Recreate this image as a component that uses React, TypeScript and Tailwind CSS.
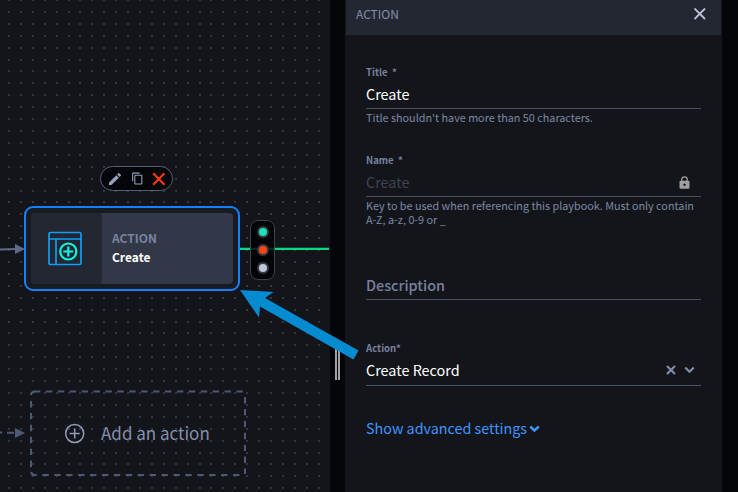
import type { ReactNode } from "react";

const PITCH = 11.91;

function DotGrid() {
  const dots: ReactNode[] = [];
  for (let row = 0; row < 42; row++) {
    for (let col = 0; col < 28; col++) {
      dots.push(
        <rect
          key={`${row}-${col}`}
          x={Math.round(8 + col * PITCH)}
          y={Math.round(-1 + row * PITCH)}
          width="2"
          height="2"
        />,
      );
    }
  }
  return (
    <svg className="absolute inset-0" width="330" height="492" fill="#303646">
      {dots}
    </svg>
  );
}

function Connectors() {
  return (
    <svg className="absolute inset-0" width="330" height="492">
      <path d="M0 249.5 L16 249" stroke="#5d6a8a" strokeWidth="2" />
      <path d="M15 244 L25 249 L15 254 Z" fill="#5d6a8a" />
      <path d="M240 248.8 H329" stroke="#0bdb7d" strokeWidth="2.2" />
      <path d="M0 432.5 H2 M7 432.7 H14" stroke="#4d5975" strokeWidth="2" />
      <path d="M15 428 L25 433 L15 438 Z" fill="#4d5975" />
    </svg>
  );
}

function RecordIcon() {
  return (
    <svg className="-ml-[3px]" width="36" height="36" viewBox="0 0 36 36" fill="none" stroke="#0e9ffa" strokeWidth="1.7">
      <rect x="2" y="1.5" width="32" height="32" rx="1.5" />
      <path d="M2 8 H34 M9 8 V33.5" />
      <circle cx="21.3" cy="20.5" r="8" fill="#232731" stroke="#0cf5e0" strokeWidth="2.2" />
      <path d="M21.3 15.5 V25.5 M16.3 20.5 H26.3" stroke="#0cf5e0" strokeWidth="2.2" />
    </svg>
  );
}

function NodeToolbar() {
  return (
    <div className="absolute left-[100px] top-[166px] flex h-[25px] w-[73px] items-center rounded-full border border-[#566078] bg-[#050609] pl-[6px]">
      <svg width="16" height="16" viewBox="0 0 24 24" fill="#95a0ba">
        <path d="M3 17.25V21h3.75L17.81 9.94l-3.75-3.75L3 17.25zM20.71 7.04a1 1 0 0 0 0-1.41l-2.34-2.34a1 1 0 0 0-1.41 0l-1.83 1.83 3.75 3.75 1.83-1.83z" />
      </svg>
      <svg className="ml-[8px]" width="13" height="13" viewBox="0 0 24 24" fill="#95a0ba">
        <path d="M16 1H4a2 2 0 0 0-2 2v14h2V3h12V1zm3 4H8a2 2 0 0 0-2 2v14a2 2 0 0 0 2 2h11a2 2 0 0 0 2-2V7a2 2 0 0 0-2-2zm0 16H8V7h11v14z" />
      </svg>
      <svg className="ml-[8px]" width="14" height="14" viewBox="0 0 14 14" stroke="#ff3d0f" strokeWidth="2">
        <path d="M1.2 1.2 L12.4 12.8 M12.4 1.2 L1.2 12.8" />
      </svg>
    </div>
  );
}

function ActionNode() {
  return (
    <div className="absolute left-[24px] top-[206px] h-[85px] w-[216px] rounded-[9px] border-2 border-[#1580fb] bg-[#181b22] p-[5px]">
      <div className="flex h-full overflow-hidden rounded-[4px] bg-[#323847]">
        <div className="flex w-[71px] items-center justify-center rounded-r-[3px] bg-[#232731]">
          <RecordIcon />
        </div>
        <div className="flex flex-col pl-[10px] pt-[15px] font-bold">
          <span className="text-[12px] leading-[19px] text-[#77839f]">ACTION</span>
          <span className="text-[12px] leading-[19px] text-white">Create</span>
        </div>
      </div>
    </div>
  );
}

function StatusPorts() {
  return (
    <div className="absolute left-[250px] top-[220px] flex h-[60px] w-[25px] flex-col items-center justify-center gap-[6px] rounded-[8px] border border-[#3a4152] bg-black/80">
      <span className="size-[12px] rounded-full border-2 border-[#343947] bg-[#22e0b5]" />
      <span className="size-[12px] rounded-full border-2 border-[#343947] bg-[#ff4713]" />
      <span className="size-[12px] rounded-full border-2 border-[#343947] bg-[#c2c7d6]" />
    </div>
  );
}

function AddActionNode() {
  return (
    <div className="absolute left-[30px] top-[390px] h-[86px] w-[216px]">
      <svg className="absolute inset-0" width="216" height="86" fill="none" stroke="#4d5975" strokeWidth="2">
        <path d="M4 1.5 H213" strokeDasharray="6.4 5.51" strokeDashoffset="0" />
        <path d="M1.5 85 H211" strokeDasharray="6.4 5.51" strokeDashoffset="1" />
        <path d="M1 11 V78" strokeDasharray="6.4 5.51" />
        <path d="M215 7 V84" strokeDasharray="6.4 5.51" />
        <path d="M1 5 Q1 1.5 5 1.5 M1 82 Q2 85 5 85" />
      </svg>
      <div className="relative flex h-full items-center pl-[34px]">
        <svg width="21" height="21" viewBox="0 0 21 21" fill="none" stroke="#8f9bb8" strokeWidth="1.5">
          <circle cx="10.7" cy="10.5" r="9" />
          <path d="M10.7 5.5 V15.5 M5.7 10.5 H15.7" />
        </svg>
        <span className="ml-[16px] whitespace-nowrap text-[17px] leading-[22px] text-[#8490ac]">Add an action</span>
      </div>
    </div>
  );
}

function Canvas() {
  return (
    <div className="relative h-full w-[330px] shrink-0 overflow-hidden bg-[#13151a]">
      <DotGrid />
      <Connectors />
      <NodeToolbar />
      <ActionNode />
      <StatusPorts />
      <AddActionNode />
    </div>
  );
}

function Splitter() {
  return (
    <div className="flex h-full w-[15px] shrink-0 justify-center bg-[#050609] pt-[346px]">
      <div className="flex h-[34px] gap-px">
        <span className="w-[2px] bg-[#a2a2a4]" />
        <span className="w-[2px] bg-[#a2a2a4]" />
      </div>
    </div>
  );
}

function Label({ children }: { children: ReactNode }) {
  return <div className="whitespace-pre text-[9.6px] font-bold leading-[14px] text-[#77839f]">{children}</div>;
}

function Panel() {
  return (
    <div className="flex h-full w-[377px] shrink-0 flex-col bg-[#13151a] pl-px">
      <header className="flex h-[35px] w-[375px] shrink-0 items-center justify-between bg-[#232731] pb-[7px] pl-[10px] pr-[15px]">
        <span className="text-[12px] leading-[18px] text-[#8490ac]">ACTION</span>
        <svg width="12" height="12" viewBox="0 0 12 12" stroke="#b9c3dc" strokeWidth="1.8">
          <path d="M.5 .5 L11 11 M11 .5 L.5 11" />
        </svg>
      </header>
      <div className="flex flex-col pl-[20px] pr-[21px] pt-[30px]">
        <Label>{"Title  *"}</Label>
        <div className="flex h-[30px] items-center border-b border-[#465269] pt-px text-[14.4px] leading-[24px] text-white">Create</div>
        <p className="text-[10.8px] leading-[16px] text-[#7d89a6]">Title shouldn't have more than 50 characters.</p>

        <div className="pt-[28px]">
          <Label>{"Name  *"}</Label>
        </div>
        <div className="flex h-[30px] items-center justify-between border-b border-[#465269] pr-[11px] pt-px">
          <span className="text-[14.4px] leading-[24px] text-[#3d4454]">Create</span>
          <svg className="mt-px" width="11" height="13" viewBox="0 0 11 13">
            <path d="M2.8 5.5 V3.6 a2.7 2.7 0 0 1 5.4 0 V5.5" fill="none" stroke="#a0a0a0" strokeWidth="1.3" />
            <path fillRule="evenodd" d="M1.5 4.8 H9.5 Q10.5 4.8 10.5 5.8 V11.7 Q10.5 12.7 9.5 12.7 H1.5 Q.5 12.7 .5 11.7 V5.8 Q.5 4.8 1.5 4.8 Z M5.5 7.4 a1.3 1.3 0 1 0 .01 0 Z" fill="#a0a0a0" />
          </svg>
        </div>
        <p className="pt-px text-[10.8px] leading-[14px] text-[#7d89a6]">
          Key to be used when referencing this playbook. Must only contain
          <br />
          A-Z, a-z, 0-9 or _
        </p>

        <div className="mt-[44px] h-[30px] border-b border-[#465269] pt-[3px] text-[14.4px] font-medium leading-[24px] text-[#77839f]">Description</div>

        <div className="pt-[41px]">
          <Label>Action*</Label>
        </div>
        <div className="flex h-[31px] items-center border-b border-[#465269] pr-[6px] text-[14.4px] text-white">
          <span className="leading-[24px]">Create Record</span>
          <svg className="ml-auto" width="10" height="10" viewBox="0 0 10 10" stroke="#7f8dad" strokeWidth="2.2">
            <path d="M1 1 L9 9 M9 1 L1 9" />
          </svg>
          <svg className="ml-[8px]" width="11" height="8" viewBox="0 0 11 8" fill="none" stroke="#7f8dad" strokeWidth="2.2">
            <path d="M1.2 1.5 L5.5 5.7 L9.8 1.5" />
          </svg>
        </div>

        <div className="mt-[30px] flex items-center text-[#3f95ff]">
          <span className="whitespace-nowrap text-[14.35px] leading-[24px]">Show advanced settings</span>
          <svg className="ml-[2px] mt-px" width="11" height="8" viewBox="0 0 11 8" fill="none" stroke="currentColor" strokeWidth="2.4">
            <path d="M1.2 1.5 L5.5 5.5 L9.8 1.5" />
          </svg>
        </div>
      </div>
    </div>
  );
}

export default function App() {
  return (
    <div
      className="relative flex h-[492px] w-[738px] overflow-hidden bg-[#050609]"
      style={{ fontFamily: '"Noto Sans CJK SC", "Open Sans", sans-serif' }}
    >
      <Canvas />
      <Splitter />
      <Panel />
      <svg className="pointer-events-none absolute left-[236px] top-[286px]" width="126" height="76">
        <path d="M4 4 L37.5 6 L29 12 L122.5 64.5 L117.5 73.5 L24 20.5 L23 31.5 Z" fill="#058bd0" />
      </svg>
    </div>
  );
}
